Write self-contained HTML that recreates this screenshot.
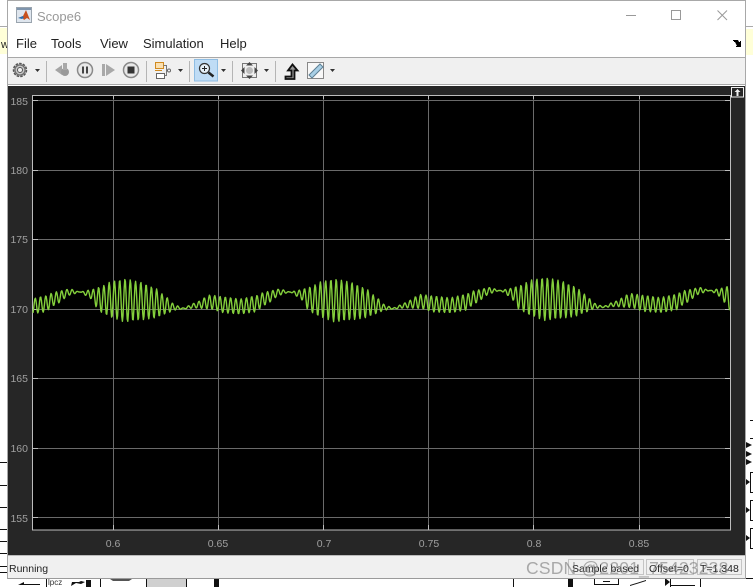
<!DOCTYPE html>
<html><head><meta charset="utf-8"><style>
html,body{margin:0;padding:0;width:753px;height:587px;overflow:hidden;background:#fff;font-family:"Liberation Sans",sans-serif}
div{position:absolute;white-space:nowrap}
.m{top:36px;font-size:13px;color:#222}
.y{left:8px;width:20px;text-align:right;font-size:10.5px;color:#a0a0a0}
.x{top:538px;width:40px;text-align:center;font-size:10.5px;color:#a0a0a0}
.st{top:559px;height:16px;border:1px solid #c4c4c4;box-sizing:border-box}
.t{top:563px;font-size:10.5px;color:#222}
svg{position:absolute;left:0;top:0}
</style></head><body>
<svg width="753" height="587" style="z-index:0">
<rect x="0" y="26" width="8" height="1" fill="#aaa"/><rect x="0" y="28" width="8" height="26" fill="#ffffd8"/>
<rect x="745" y="26" width="8" height="1" fill="#aaa"/><rect x="745" y="29" width="8" height="26" fill="#ffffd8"/>
<g fill="#111">
<rect x="0" y="507" width="8" height="1"/><rect x="0" y="529" width="8" height="1"/><rect x="0" y="541" width="8" height="1"/><rect x="0" y="553" width="8" height="1"/><rect x="0" y="566" width="8" height="1"/><rect x="0" y="572" width="8" height="1"/><rect x="0" y="462" width="8" height="1"/><rect x="0" y="485" width="8" height="1"/>
<rect x="750" y="420" width="3" height="1"/><rect x="750" y="438" width="3" height="1"/>
<path d="M746 442l6 3-6 3zM746 451l6 3-6 3zM746 459l6 3-6 3zM746 479l4 3-4 3zM746 507l4 3-4 3zM746 535l4 3-4 3z"/>
<rect x="750" y="472" width="3" height="1"/><rect x="750" y="492" width="3" height="1"/><rect x="750" y="500" width="3" height="1"/><rect x="750" y="520" width="3" height="1"/><rect x="750" y="528" width="3" height="1"/><rect x="750" y="548" width="3" height="1"/>
<rect x="750" y="472" width="1" height="20"/><rect x="750" y="500" width="1" height="20"/><rect x="750" y="528" width="1" height="20"/>
<rect x="745" y="578" width="8" height="1"/>
<path d="M18 585l6-3v2h16v1z"/>
<rect x="46" y="579" width="1" height="8"/>
<rect x="86" y="580" width="5" height="7"/><path d="M72 582l4 0 3 0 2-1 4 1-4 2-5-1-5 3z"/>
<rect x="100" y="579" width="1" height="8"/>
<path d="M110 579h22l-3 2h-16z" fill="#555"/>
<rect x="147" y="579" width="39" height="8" fill="#d0d0d0"/><rect x="146" y="579" width="1" height="8"/><rect x="186" y="579" width="1" height="8"/>
<rect x="214" y="579" width="5" height="8"/>
<rect x="513" y="579" width="1" height="8"/>
<rect x="568" y="579" width="5" height="8"/>
<path d="M594 579v6h25v-6h-1v5h-23v-5z"/><rect x="603" y="581" width="7" height="1"/>
<path d="M630 585l16-5v1l-16 5z"/><path d="M665 578l5 4-5 4z"/><rect x="670" y="579" width="1" height="8"/><rect x="670" y="585" width="25" height="1"/><rect x="700" y="579" width="1" height="8"/>
</g>
</svg>
<div style="left:1px;top:39px;font-size:11px;color:#222">w</div>
<div style="left:48px;top:578px;font-size:8px;color:#333">lpcz</div>

<div style="left:7px;top:0;width:739px;height:579px;background:#fff;box-sizing:border-box;border:1px solid #a8a8a8;border-bottom-color:#9a9a9a"></div>
<div style="left:8px;top:58px;width:737px;height:27px;background:#f0f0f0"></div>
<div style="left:8px;top:57px;width:737px;height:1px;background:#a8a8a8"></div>
<div style="left:8px;top:84px;width:737px;height:1px;background:#a8a8a8"></div>
<div style="left:8px;top:86px;width:737px;height:469px;background:#262626"></div>
<div style="left:8px;top:555px;width:737px;height:23px;background:#f0f0f0;border-top:1px solid #bbb;box-sizing:border-box"></div>

<div style="left:37px;top:9px;font-size:13px;color:#999">Scope6</div>
<div class="m" style="left:16px">File</div><div class="m" style="left:51px">Tools</div><div class="m" style="left:100px">View</div><div class="m" style="left:143px">Simulation</div><div class="m" style="left:220px">Help</div>

<svg width="753" height="587" style="z-index:1">
<!-- app icon -->
<rect x="16.500" y="7.500" width="15" height="15" fill="#dfe6ee" stroke="#9aa4ae"/><rect x="17" y="8" width="14" height="2" fill="#7f95ad"/>
<path d="M18 18l5-2 3-6 4 10-3-2-3 2-2-3z" fill="#c8501c"/><path d="M18 18l5-2 1 2-2 1z" fill="#2a6fb0"/>
<!-- window controls -->
<rect x="626" y="15" width="10" height="1" fill="#999"/>
<rect x="671.500" y="10.500" width="9" height="9" fill="none" stroke="#999"/>
<path d="M717.500 10.500l9.500 9.500M727 10.500l-9.500 9.500" stroke="#999" fill="none"/>
<path d="M733 40h5l1 2h1v-1h1v6h-5v-1h1l-1-2-1-2h-1v-1h-1z" fill="#000"/>
<!-- separators -->
<g fill="#b5b5b5"><rect x="46" y="61" width="1" height="21"/><rect x="146" y="61" width="1" height="21"/><rect x="189" y="61" width="1" height="21"/><rect x="232" y="61" width="1" height="21"/><rect x="275" y="61" width="1" height="21"/></g>
<!-- carets -->
<g fill="#333"><path d="M35 69h5l-2.500 3zM178 69h5l-2.500 3zM221 69h5l-2.500 3zM264 69h5l-2.500 3zM330 69h5l-2.500 3z"/></g>
<!-- gear -->
<circle cx="20" cy="70" r="6.500" fill="#bdbdbd" stroke="#555" stroke-width="1.500" stroke-dasharray="2.500 1.200"/><circle cx="20" cy="70" r="5" fill="#c8c8c8" stroke="#666"/><circle cx="20" cy="70" r="2.500" fill="#f0f0f0" stroke="#555"/>
<!-- step back -->
<path d="M55 70l7-5v10z" fill="#a4a4a4"/><circle cx="65" cy="72" r="4" fill="#999"/><rect x="63" y="63" width="4" height="7" fill="#a8a8a8"/>
<!-- pause -->
<circle cx="85" cy="70" r="7.500" fill="#e8e8e8" stroke="#8a8a8a" stroke-width="1.500"/><rect x="82" y="66.500" width="2" height="7" fill="#444"/><rect x="86" y="66.500" width="2" height="7" fill="#444"/>
<!-- step forward -->
<rect x="102" y="64" width="3" height="12" fill="#a8a8a8"/><path d="M106 64l9 6-9 6z" fill="#a8a8a8"/>
<!-- stop -->
<circle cx="131" cy="70" r="7.500" fill="#e8e8e8" stroke="#8a8a8a" stroke-width="1.500"/><rect x="127.500" y="66.500" width="7" height="7" fill="#333"/>
<!-- blocks -->
<rect x="155.500" y="62.500" width="8" height="6" fill="#fbe0b0" stroke="#d08a20"/><rect x="156.500" y="73.500" width="8" height="5" fill="#fff" stroke="#666"/><path d="M163.500 65.500h3v10h-2M166.500 70.500h1" fill="none" stroke="#777"/><circle cx="169" cy="70.500" r="1.500" fill="#fff" stroke="#666"/><rect x="155" y="70" width="7" height="1" fill="#d08a20"/>
<!-- zoom -->
<rect x="194.500" y="59.500" width="23" height="21.500" fill="#bfdcf5" stroke="#8fbde3"/>
<circle cx="204.500" cy="68.500" r="5" fill="#e6f0f8" stroke="#333" stroke-width="1.200"/><path d="M202 68.500h5M204.500 66v5" stroke="#222" fill="none"/><path d="M208.500 72.500l5 4" stroke="#222" stroke-width="2.500" fill="none"/>
<!-- fit -->
<rect x="242.500" y="63.500" width="14" height="14" fill="#eee" stroke="#777"/><circle cx="249.500" cy="70.500" r="3.500" fill="#bbb"/>
<path d="M249.500 62l3.500 3.500h-7zM249.500 79l3.500-3.500h-7zM241 70.500l3.500-3.500v7zM258 70.500l-3.500-3.500v7z" fill="#444"/>
<!-- trigger -->
<path d="M285.500 76.500h6v-6h-3.500l4.500-6 5 6h-3v8.500h-9z" fill="#999" stroke="#111" stroke-width="1.800"/>
<!-- ruler -->
<rect x="307.500" y="62.500" width="16" height="16" fill="#f8f8f8" stroke="#888"/><path d="M309 75l11-11 3 3-11 11z" fill="#a8cfe6" stroke="#5d7f94"/>
<!-- undock -->
<rect x="731.500" y="87.500" width="12" height="9.500" fill="#262626" stroke="#eee"/><path d="M737.500 89l3 3h-2v4h-2v-4h-2z" fill="#eee"/>
<!-- plot -->
<rect x="32.500" y="95.500" width="698" height="434.500" fill="#000"/>
<g stroke="#6a6a6a" fill="none">
<path d="M113.500 96v434M218.500 96v434M323.500 96v434M428.500 96v434M533.500 96v434M639.500 96v434"/>
<path d="M33 100.500h697M33 170.500h697M33 239.500h697M33 309.500h697M33 378.500h697M33 448.500h697M33 517.500h697"/>
</g>
<g stroke="#bdbdbd" fill="none">
<path d="M113.500 96v3M218.500 96v3M323.500 96v3M428.500 96v3M533.500 96v3M639.500 96v3M113.500 525v5M218.500 525v5M323.500 525v5M428.500 525v5M533.500 525v5M639.500 525v5"/>
<path d="M33 100.500h5M33 170.500h5M33 239.500h5M33 309.500h5M33 378.500h5M33 448.500h5M33 517.500h5M725 100.500h5M725 170.500h5M725 239.500h5M725 309.500h5M725 378.500h5M725 448.500h5M725 517.500h5"/>
<rect x="32.500" y="95.500" width="698" height="434.500"/>
</g>
<polyline id="sig" fill="none" stroke="#84cf3c" stroke-width="1.400" stroke-linejoin="round"/>
</svg>

<div class="y" style="top:96px;z-index:2">185</div><div class="y" style="top:165px;z-index:2">180</div><div class="y" style="top:234px;z-index:2">175</div><div class="y" style="top:304px;z-index:2">170</div><div class="y" style="top:373px;z-index:2">165</div><div class="y" style="top:443px;z-index:2">160</div><div class="y" style="top:513px;z-index:2">155</div>
<div class="x" style="left:93px;z-index:2">0.6</div><div class="x" style="left:198px;z-index:2">0.65</div><div class="x" style="left:304px;z-index:2">0.7</div><div class="x" style="left:409px;z-index:2">0.75</div><div class="x" style="left:514px;z-index:2">0.8</div><div class="x" style="left:619px;z-index:2">0.85</div>

<div style="left:9px;top:563px;font-size:10.500px;color:#222;z-index:2">Running</div>
<div class="st" style="left:568px;width:76px;z-index:2"></div><div class="st" style="left:646px;width:48px;z-index:2"></div><div class="st" style="left:697px;width:45px;z-index:2"></div>
<div class="t" style="left:572px;z-index:2">Sample based</div><div class="t" style="left:649px;z-index:2">Offset=0</div><div class="t" style="left:700px;z-index:2">T=1.348</div>
<div style="left:526px;top:558px;font-size:17.500px;color:rgba(120,120,120,.6);z-index:3;letter-spacing:.2px">CSDN @2201_75423238</div>

<script>
var k=[[0,292,292],[10,290,298],[20,287,312],[33,281,318],[45,279,322],[60,282,320],[75,288,318],[85,296,314],[95,305,310],[103,308,309],[115,303,308],[130,295,309],[145,297,313],[160,299,314],[175,296,312],[185,292,305],[200,289,295],[210,292,292]];
function env(p,i){for(var j=0;j<k.length-1;j++){if(p<=k[j+1][0]){var t=(p-k[j][0])/(k[j+1][0]-k[j][0]);t=t*t*(3-2*t)*.5+t*.5;return k[j][i]+(k[j+1][i]-k[j][i])*t;}}return k[0][i];}
var s=[];
for(var x=33;x<=730;x+=0.6){
var p=((x-80)%210+210)%210;
var off=x>400?-1.500*Math.min(1,(x-400)/60):0;
var u=env(p,1)+off,l=env(p,2)+off;
var v=Math.sin(2*Math.PI*(x-125)/5.28+Math.PI/2);
s.push(x.toFixed(1)+","+((u+l)/2-(l-u)/2*v).toFixed(1));
}
document.getElementById("sig").setAttribute("points",s.join(" "));
</script>
</body></html>
